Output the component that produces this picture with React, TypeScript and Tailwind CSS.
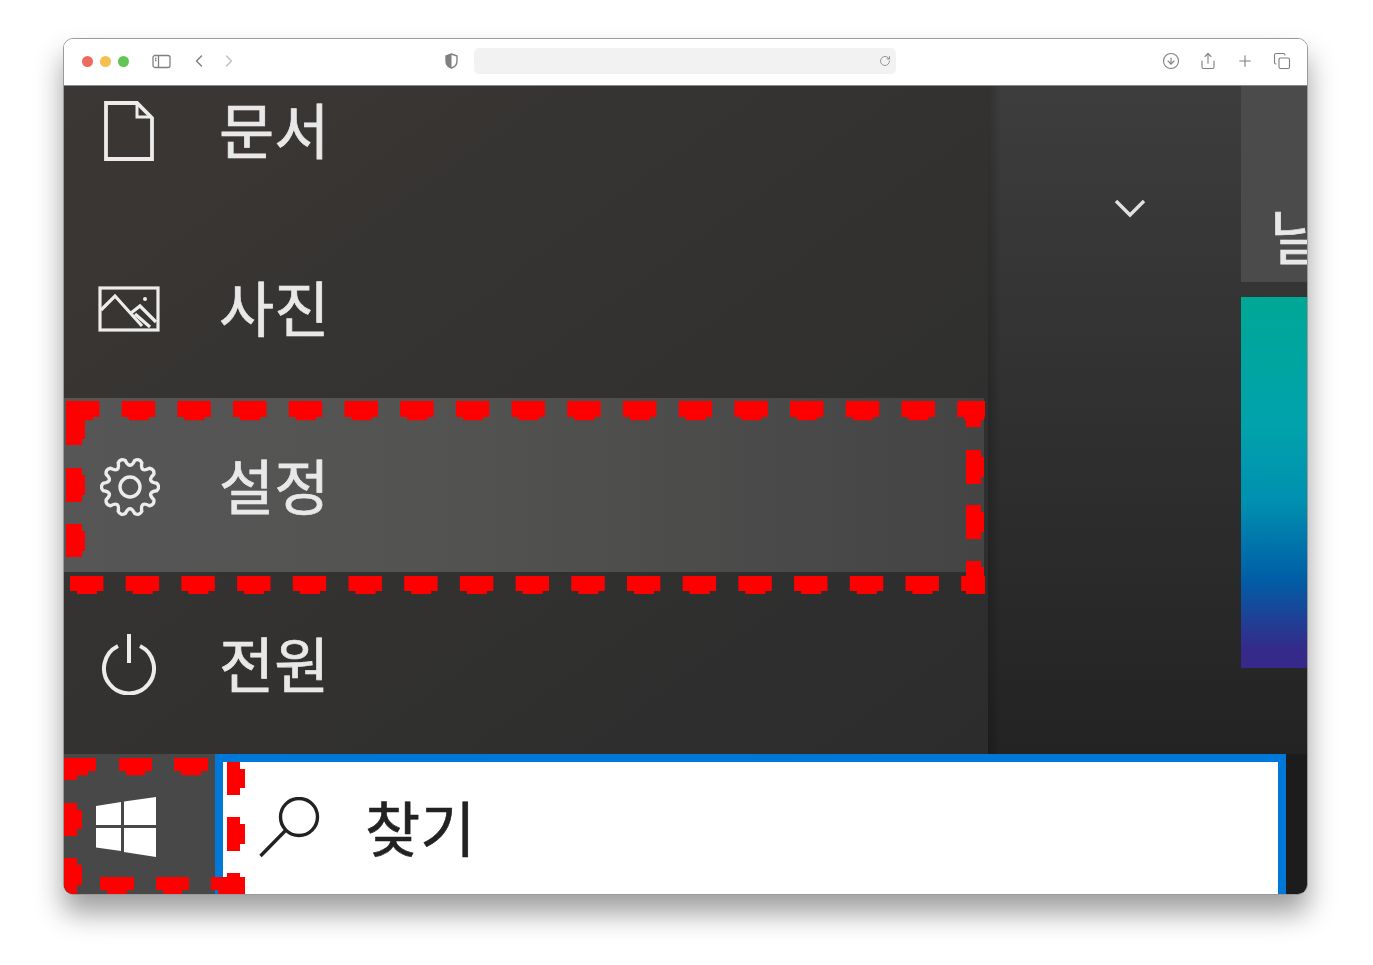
import React from 'react';
import { ChevronLeft, ChevronRight, CircleArrowDown, Copy, Plus, RotateCw, Share } from 'lucide-react';

const gearPath = (() => {
  const teeth = 10;
  const pts: string[] = [];
  const step = (Math.PI * 2) / teeth;
  const at = (r: number, t: number) => `${(30 + r * Math.cos(t)).toFixed(2)} ${(30 + r * Math.sin(t)).toFixed(2)}`;
  for (let i = 0; i < teeth; i++) {
    const a = i * step;
    pts.push(`${i === 0 ? 'M' : 'L'}${at(27, a - step * 0.22)}`);
    pts.push(`Q${at(30.5, a)} ${at(27, a + step * 0.22)}`);
    pts.push(`Q${at(17, a + step * 0.5)} ${at(27, a + step * 0.78)}`);
  }
  return pts.join(' ') + ' Z';
})();

function DocIcon() {
  return (
    <svg width="52" height="62" viewBox="0 0 52 62" fill="none" stroke="#ececec" strokeWidth="3.8" className="mt-[2px] blur-[0.7px]">
      <path d="M3 3H34L49 18V59H3Z" />
      <path d="M34 5V17H47" strokeWidth="3" />
    </svg>
  );
}

function PhotoIcon() {
  return (
    <svg width="62" height="46" viewBox="0 0 62 46" fill="none" stroke="#ececec" strokeWidth="3.2" className="mt-[1px] blur-[0.7px]">
      <rect x="2" y="2" width="58" height="42" />
      <path d="M3 24L17 10L44 40" />
      <path d="M33 27L42 20L58 36M37 28L52 41" />
      <circle cx="47" cy="13" r="2" fill="#ececec" stroke="none" />
    </svg>
  );
}

function GearIcon() {
  return (
    <svg width="60" height="60" viewBox="0 0 60 60" fill="none" stroke="#ececec" strokeWidth="3.4" className="ml-[1px] mt-[2px] blur-[0.7px]">
      <path d={gearPath} />
      <circle cx="30" cy="30" r="10" />
    </svg>
  );
}

function PowerIcon() {
  return (
    <svg width="56" height="62" viewBox="0 0 56 62" fill="none" stroke="#ececec" strokeWidth="4" className="blur-[0.7px]">
      <path d="M28 1V30" />
      <path d="M17 13A25 25 0 1 0 39 13" />
    </svg>
  );
}

function WindowsLogo() {
  return (
    <svg width="60" height="60" viewBox="0 0 60 60" fill="white" className="blur-[0.6px]">
      <path d="M0 9L25 5V28H0ZM28 4.5L60 0V28H28ZM0 31H25V54L0 50.5ZM28 31H60V60L28 55Z" />
    </svg>
  );
}

function SearchGlass() {
  return (
    <svg width="62" height="62" viewBox="0 0 62 62" fill="none" stroke="#222" strokeWidth="3.4" className="blur-[0.6px]">
      <circle cx="40" cy="20" r="18.5" />
      <path d="M27 33L1.5 59" />
    </svg>
  );
}

function SidebarIcon() {
  return (
    <svg width="19" height="15" viewBox="0 0 19 15" fill="none" stroke="#808080" strokeWidth="1.3">
      <rect x="1" y="1.5" width="17" height="12" rx="2" />
      <path d="M6.5 1.5V13.5" />
      <path d="M3 4.5H4.5M3 6.5H4.5" />
    </svg>
  );
}

function ShieldIcon() {
  return (
    <svg width="13" height="16" viewBox="0 0 13 16">
      <path d="M6.5 1L12 3V8C12 11.5 9.5 14 6.5 15C3.5 14 1 11.5 1 8V3Z" fill="none" stroke="#808080" strokeWidth="1.4" />
      <path d="M6.5 1L1 3V8C1 11.5 3.5 14 6.5 15Z" fill="#808080" />
    </svg>
  );
}

// the red annotation has small notches on each dash, from the upscaled source
function HighlightDashes() {
  return (
    <svg className="absolute left-0 top-0 overflow-visible pointer-events-none" width="924" height="178" fill="none" stroke="#ff0000">
      <path d="M2 12H921" strokeWidth="16" strokeDasharray="33.4 22.3" />
      <path d="M9 21.5H921" strokeWidth="3.5" strokeDasharray="20 35.7" />
      <path d="M6 186.5H921" strokeWidth="15" strokeDasharray="33.4 22.3" />
      <path d="M13 195.5H921" strokeWidth="3" strokeDasharray="20 35.7" />
      <path d="M10 5V48M10 71V105M10 127V160" strokeWidth="16" />
      <path d="M19.5 20V42M19.5 78V98M19.5 134V154" strokeWidth="3" />
      <path d="M909.5 20V30M909.5 53V87M909.5 108V142M909.5 164V197" strokeWidth="15" />
      <path d="M918.5 60V80M918.5 115V135M918.5 170V197" strokeWidth="3" />
    </svg>
  );
}

function StartDashes() {
  return (
    <svg className="absolute left-0 top-0 overflow-visible pointer-events-none" width="181" height="140" fill="none" stroke="#ff0000">
      <path d="M0 10.5H32M55 10.5H88M110 10.5H144" strokeWidth="13" />
      <path d="M0 19H24M62 19H81M117 19H137" strokeWidth="4.5" />
      <path d="M36 129.5H70M92 129.5H125M147 129.5H181" strokeWidth="13" />
      <path d="M43 138H63M99 138H118M154 138H181" strokeWidth="4.5" />
      <path d="M6.5 4V26M6.5 49V82M6.5 104V140" strokeWidth="13" />
      <path d="M15.5 56V75M15.5 111V131" strokeWidth="5" />
      <path d="M169.5 8V41M169.5 63V97M169.5 119V140" strokeWidth="13" />
      <path d="M178.5 15V34M178.5 70V90M178.5 126V140" strokeWidth="5" />
    </svg>
  );
}

const rowText = 'text-[60px] leading-none text-[#e8e8e8] blur-[0.6px] [-webkit-text-stroke:0.7px_#e8e8e8]';

function MenuRow({ icon, label, active }: { icon: React.ReactNode; label: string; active?: boolean }) {
  return (
    <div className={`relative flex h-[178px] shrink-0 items-center ${active ? 'z-10' : ''}`}>
      {active && <div className="absolute top-[1px] bottom-[3px] left-0 right-[4px] bg-gradient-to-r from-[#565656] via-[#535352] via-40% to-[#444444]" />}
      <div className="relative flex w-[130px] shrink-0 justify-center">{icon}</div>
      <span className={`relative ml-[25px] pb-[4px] ${rowText}`}>{label}</span>
      {active && <HighlightDashes />}
    </div>
  );
}

export default function App() {
  return (
    <div
      className="h-[965px] w-[1373px] overflow-hidden bg-white pl-[63px] pt-[38px]"
      style={{ fontFamily: '"Noto Sans CJK KR", "Noto Sans", sans-serif' }}
    >
      <div className="flex h-[857px] w-[1245px] flex-col overflow-hidden rounded-[10px] border border-[#9a9a9a] shadow-[0_18px_28px_rgba(0,0,0,0.38)]">
        {/* Browser toolbar */}
        <div className="flex h-[47px] shrink-0 items-center border-b border-[#8a8a8a] bg-white pb-[2px] pl-[18px] text-[#808080]">
          <div className="flex gap-[7px]">
            <span className="h-[11px] w-[11px] rounded-full bg-[#ec6a5e]" />
            <span className="h-[11px] w-[11px] rounded-full bg-[#f4bf4f]" />
            <span className="h-[11px] w-[11px] rounded-full bg-[#61c554]" />
          </div>
          <div className="ml-[23px]">
            <SidebarIcon />
          </div>
          <ChevronLeft className="ml-[18px] h-[20px] w-[20px]" strokeWidth={1.7} />
          <ChevronRight className="ml-[10px] h-[20px] w-[20px] text-[#c0c0c0]" strokeWidth={1.7} />
          <div className="ml-[206px]">
            <ShieldIcon />
          </div>
          <div className="ml-[16px] flex h-[26px] w-[422px] items-center justify-end rounded-[5px] bg-[#f2f2f2] pr-[5px]">
            <RotateCw className="h-[12px] w-[12px]" strokeWidth={1.6} />
          </div>
          <div className="ml-[266px] flex items-center gap-[19px]">
            <CircleArrowDown className="h-[18px] w-[18px]" strokeWidth={1.5} />
            <Share className="h-[18px] w-[18px]" strokeWidth={1.5} />
            <Plus className="h-[18px] w-[18px]" strokeWidth={1.5} />
            <Copy className="h-[18px] w-[18px]" strokeWidth={1.5} />
          </div>
        </div>

        {/* Start menu */}
        <div className="flex min-h-0 flex-1 flex-col">
          <div className="flex h-[668px] shrink-0">
            <div className="flex w-[924px] shrink-0 flex-col bg-gradient-to-br from-[#3b3734] via-[#333231] to-[#2c2c2c]">
              <div className="-mt-[45px] flex flex-col">
                <MenuRow icon={<DocIcon />} label="문서" />
                <MenuRow icon={<PhotoIcon />} label="사진" />
                <MenuRow icon={<GearIcon />} label="설정" active />
                <MenuRow icon={<PowerIcon />} label="전원" />
              </div>
            </div>
            <div className="flex flex-1 bg-gradient-to-b from-[#3d3d3d] to-[#232323]">
              <div className="flex w-[253px] shrink-0 justify-center bg-gradient-to-r from-black/20 to-transparent to-[5%] pl-[31px] pt-[112px]">
                <svg width="32" height="20" viewBox="0 0 32 20" fill="none" stroke="#e0e0e0" strokeWidth="3.4" className="blur-[0.6px]">
                  <path d="M2 3L16 17L30 3" />
                </svg>
              </div>
              <div className="flex min-w-0 flex-1 flex-col overflow-hidden">
                <div className="flex h-[196px] shrink-0 items-end overflow-hidden bg-[#4b4b4b] pb-[18px] pl-[29px]">
                  <span className={`whitespace-nowrap ${rowText}`}>날씨</span>
                </div>
                <div className="mt-[15px] h-[371px] shrink-0 bg-[linear-gradient(180deg,#00a896_0%,#00a2ac_35%,#0090b0_55%,#005ea6_76%,#352a8a_95%)]" />
              </div>
            </div>
          </div>

          {/* Taskbar */}
          <div className="relative z-20 flex min-h-0 flex-1 bg-[#1c1c1c]">
            <div className="flex w-[151px] shrink-0 items-center justify-center bg-[#484848] pr-[28px] pt-[6px]">
              <WindowsLogo />
            </div>
            <div className="flex w-[1071px] shrink-0 items-center border-[8px] border-b-0 border-[#0078d7] bg-white pl-[36px]">
              <SearchGlass />
              <span className="ml-[44px] pb-[4px] text-[60px] leading-none text-[#222] blur-[0.5px] [-webkit-text-stroke:0.6px_#222]">찾기</span>
            </div>
            <StartDashes />
          </div>
        </div>
      </div>
    </div>
  );
}
